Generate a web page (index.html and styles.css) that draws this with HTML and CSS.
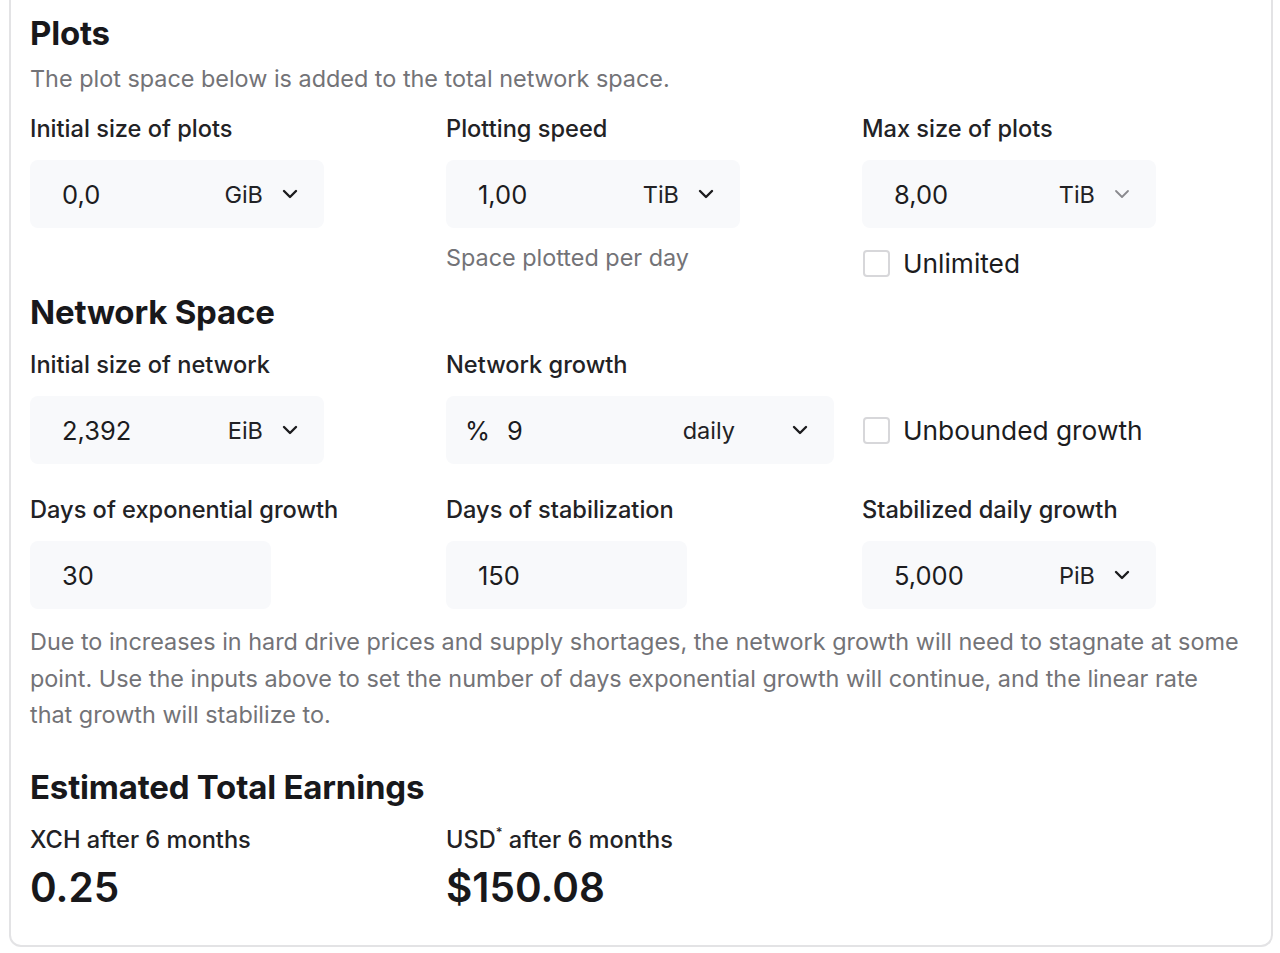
FILE: index.html
```html
<!DOCTYPE html>
<html>
<head>
<meta charset="utf-8">
<link rel="stylesheet" href="styles.css">
</head>
<body>
<div class="card">
  <h2 class="heading h-plots">Plots</h2>
  <p class="sub">The plot space below is added to the total network space.</p>
  <div class="grid row-plots">
    <div class="field">
      <div class="label">Initial size of plots</div>
      <div class="input w294"><span class="val">0,0</span><span class="unit">GiB</span><svg class="chev" viewBox="0 0 16 10"><path d="M2 2l6 6 6-6"/></svg></div>
    </div>
    <div class="field">
      <div class="label">Plotting speed</div>
      <div class="input w294"><span class="val">1,00</span><span class="unit">TiB</span><svg class="chev" viewBox="0 0 16 10"><path d="M2 2l6 6 6-6"/></svg></div>
      <div class="helper">Space plotted per day</div>
    </div>
    <div class="field">
      <div class="label">Max size of plots</div>
      <div class="input w294"><span class="val">8,00</span><span class="unit">TiB</span><svg class="chev light" viewBox="0 0 16 10"><path d="M2 2l6 6 6-6"/></svg></div>
      <label class="check c1"><span class="box"></span><span>Unlimited</span></label>
    </div>
  </div>

  <h2 class="heading h-net">Network Space</h2>
  <div class="grid row-net">
    <div class="field">
      <div class="label">Initial size of network</div>
      <div class="input w294"><span class="val">2,392</span><span class="unit">EiB</span><svg class="chev" viewBox="0 0 16 10"><path d="M2 2l6 6 6-6"/></svg></div>
    </div>
    <div class="field">
      <div class="label">Network growth</div>
      <div class="input w388 growth"><span class="pct">%</span><span class="val v9">9</span><span class="unit">daily</span><svg class="chev wide" viewBox="0 0 16 10"><path d="M2 2l6 6 6-6"/></svg></div>
    </div>
    <div class="field">
      <div class="label spacer">&nbsp;</div>
      <label class="check c2"><span class="box"></span><span>Unbounded growth</span></label>
    </div>
  </div>
  <div class="grid row-days">
    <div class="field">
      <div class="label">Days of exponential growth</div>
      <div class="input w241"><span class="val">30</span></div>
    </div>
    <div class="field">
      <div class="label">Days of stabilization</div>
      <div class="input w241"><span class="val">150</span></div>
    </div>
    <div class="field">
      <div class="label">Stabilized daily growth</div>
      <div class="input w294"><span class="val">5,000</span><span class="unit">PiB</span><svg class="chev" viewBox="0 0 16 10"><path d="M2 2l6 6 6-6"/></svg></div>
    </div>
  </div>
  <p class="note">Due to increases in hard drive prices and supply shortages, the network growth will need to stagnate at some point. Use the inputs above to set the number of days exponential growth will continue, and the linear rate that growth will stabilize to.</p>

  <h2 class="heading h-est">Estimated Total Earnings</h2>
  <div class="grid row-est">
    <div class="field">
      <div class="label">XCH after 6 months</div>
      <div class="big">0.25</div>
    </div>
    <div class="field">
      <div class="label">USD<sup>*</sup> after 6 months</div>
      <div class="big">$150.08</div>
    </div>
  </div>
</div>
</body>
</html>
```

FILE: styles.css
```css
html, body {
  margin: 0;
  padding: 0;
  background: #ffffff;
}
body {
  font-family: "Inter", "Noto Sans", sans-serif;
  color: #1c1c1e;
  width: 1280px;
  height: 953px;
  overflow: hidden;
}
.card {
  box-sizing: border-box;
  margin-left: 9px;
  width: 1264px;
  height: 947px;
  border: 2px solid #e3e3e5;
  border-top: none;
  border-radius: 0 0 12px 12px;
  padding: 15px 20px 0 19px;
}
.heading {
  margin: 0;
  font-weight: 700;
  color: #18181b;
  letter-spacing: -0.2px;
}
.h-plots {
  font-size: 33px;
  line-height: 36px;
}
.h-net {
  font-size: 33px;
  line-height: 36px;
  margin-top: 15px;
}
.h-est {
  font-size: 33px;
  line-height: 40px;
  margin-top: 33px;
}
.sub {
  margin: 12px 0 0 0;
  font-size: 23.4px;
  line-height: 32px;
  color: #737377;
}
.grid {
  display: grid;
  grid-template-columns: 416px 416px 416px;
}
.row-plots { margin-top: 19px; }
.row-net { margin-top: 20px; }
.row-days { margin-top: 31px; }
.row-est { margin-top: 18px; }
.field {
  display: flex;
  flex-direction: column;
  align-items: flex-start;
}
.label {
  font-size: 23.6px;
  line-height: 30px;
  font-weight: 500;
  color: #222225;
}
.label sup {
  font-size: 13px;
  line-height: 0;
  vertical-align: 11px;
}
.input {
  box-sizing: border-box;
  margin-top: 16px;
  height: 68px;
  background: #f8f9fb;
  border-radius: 8px;
  display: flex;
  align-items: center;
  padding: 0 26px 0 32px;
  font-size: 25.5px;
  color: #1c1c1e;
}
.w294 { width: 294px; }
.w241 { width: 241px; }
.w388 { width: 388px; }
.val {
  flex: 1;
}
.unit {
  font-size: 23.5px;
  color: #222225;
}
.chev {
  width: 16px;
  height: 10px;
  margin-left: 19px;
  fill: none;
  stroke: #1c1c1e;
  stroke-width: 2.4;
  stroke-linecap: round;
  stroke-linejoin: round;
}
.chev.light {
  stroke: #8a8a8e;
  stroke-width: 1.8;
}
.chev.wide {
  margin-left: 57px;
}
.growth {
  padding-left: 19px;
}
.pct {
  margin-right: 17px;
}
.helper {
  margin-top: 15px;
  font-size: 23.4px;
  line-height: 30px;
  color: #737377;
}
.check {
  display: flex;
  align-items: center;
  font-size: 26.3px;
  color: #1c1c1e;
}
.c1 { margin-top: 20px; }
.c2 { margin-top: 16px; height: 68px; }
.box {
  box-sizing: border-box;
  width: 27px;
  height: 27px;
  border: 2px solid #d7d7da;
  border-radius: 4px;
  background: #fff;
  margin-left: 1px;
  margin-right: 13px;
}
.note {
  margin: 15px 0 0 0;
  max-width: 1214px;
  font-size: 23.4px;
  line-height: 36.5px;
  color: #737377;
}
.big {
  margin-top: 9px;
  font-size: 40.5px;
  line-height: 48px;
  font-weight: 600;
  color: #18181b;
}
```
